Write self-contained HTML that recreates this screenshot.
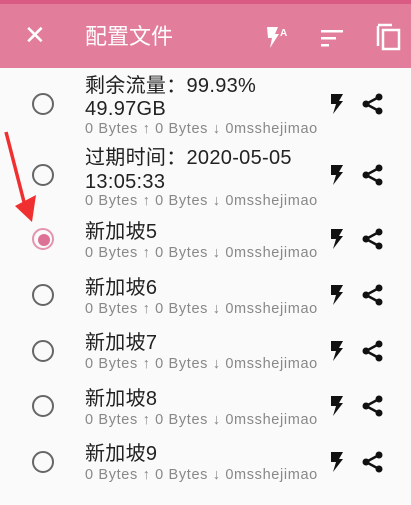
<!DOCTYPE html>
<html><head><meta charset="utf-8"><style>
body{margin:0;width:411px;height:505px;background:#fafafa;font-family:"Liberation Sans","Noto Sans CJK SC",sans-serif;position:relative;overflow:hidden}
.bar{position:absolute;left:0;top:0;width:411px;height:68px;background:#e27d9b;border-top:4px solid #d95a82;box-sizing:border-box}
.t{position:absolute;color:#222;font-size:20px;line-height:22px;left:85px;white-space:nowrap;letter-spacing:0.3px}
.s{position:absolute;color:#888;font-size:14.5px;line-height:16px;left:85px;white-space:nowrap;letter-spacing:0.65px}
.r{position:absolute;left:32px;width:18px;height:18px;border:2.5px solid #666;border-radius:50%}
.ic{position:absolute}
</style></head><body>
<div class="bar"></div>
<div style="position:absolute;left:24px;top:22px;color:#fff;font-size:26px;line-height:26px">✕</div>
<div style="position:absolute;left:85px;top:24px;color:#fff;font-size:22px;line-height:26px">配置文件</div>
<svg class="ic" style="left:265px;top:25px" width="26" height="26" viewBox="0 0 26 26"><path d="M2 2h11l-3 7h4l-9 14 2-10H3z" fill="#fff"/><text x="15" y="11" font-size="10" fill="#fff" font-weight="bold" font-family="Liberation Sans">A</text></svg>
<svg class="ic" style="left:321px;top:29px" width="24" height="18"><rect x="0" y="1" width="22" height="2.5" fill="#fff"/><rect x="0" y="8" width="15" height="2.5" fill="#fff"/><rect x="0" y="15" width="8" height="2.5" fill="#fff"/></svg>
<svg class="ic" style="left:376px;top:23px" width="26" height="28"><path d="M2 3v20" stroke="#fff" stroke-width="2.5"/><path d="M2 2h14" stroke="#fff" stroke-width="2.5"/><rect x="7" y="7" width="16" height="19" fill="none" stroke="#fff" stroke-width="2.5"/></svg>

<svg width="0" height="0" style="position:absolute"><defs>
<symbol id="b" viewBox="0 0 14 22"><path d="M1 1h12l-4 7h4L3 21l3-10H1z" fill="#111"/></symbol>
<symbol id="sh" viewBox="0 0 22 22"><circle cx="17" cy="4" r="3.5" fill="#111"/><circle cx="4" cy="11" r="3.5" fill="#111"/><circle cx="17" cy="18" r="3.5" fill="#111"/><path d="M17 4L4 11l13 7" stroke="#111" stroke-width="2.5" fill="none"/></symbol>
</defs></svg>

<div class="r" style="top:93px"></div>
<div class="t" style="top:75px">剩余流量：99.93%</div>
<div class="t" style="top:98px">49.97GB</div>
<div class="s" style="top:121px">0 Bytes ↑ 0 Bytes ↓ 0msshejimao</div>

<div class="r" style="top:164px"></div>
<div class="t" style="top:147px">过期时间：2020-05-05</div>
<div class="t" style="top:171px">13:05:33</div>
<div class="s" style="top:193px">0 Bytes ↑ 0 Bytes ↓ 0msshejimao</div>

<div class="r" style="top:228px;border-color:#e494ac"></div>
<div style="position:absolute;left:37.5px;top:233.5px;width:12px;height:12px;border-radius:50%;background:#dc7396"></div>
<div class="t" style="top:221px">新加坡5</div>
<div class="s" style="top:245px">0 Bytes ↑ 0 Bytes ↓ 0msshejimao</div>

<div class="r" style="top:284px"></div>
<div class="t" style="top:277px">新加坡6</div>
<div class="s" style="top:301px">0 Bytes ↑ 0 Bytes ↓ 0msshejimao</div>

<div class="r" style="top:340px"></div>
<div class="t" style="top:332px">新加坡7</div>
<div class="s" style="top:356px">0 Bytes ↑ 0 Bytes ↓ 0msshejimao</div>

<div class="r" style="top:395px"></div>
<div class="t" style="top:388px">新加坡8</div>
<div class="s" style="top:412px">0 Bytes ↑ 0 Bytes ↓ 0msshejimao</div>

<div class="r" style="top:451px"></div>
<div class="t" style="top:443px">新加坡9</div>
<div class="s" style="top:467px">0 Bytes ↑ 0 Bytes ↓ 0msshejimao</div>

<svg class="ic" style="left:330px;top:93px" width="14" height="22"><use href="#b"/></svg>
<svg class="ic" style="left:362px;top:93px" width="22" height="22"><use href="#sh"/></svg>
<svg class="ic" style="left:330px;top:164px" width="14" height="22"><use href="#b"/></svg>
<svg class="ic" style="left:362px;top:164px" width="22" height="22"><use href="#sh"/></svg>
<svg class="ic" style="left:330px;top:228px" width="14" height="22"><use href="#b"/></svg>
<svg class="ic" style="left:362px;top:228px" width="22" height="22"><use href="#sh"/></svg>
<svg class="ic" style="left:330px;top:284px" width="14" height="22"><use href="#b"/></svg>
<svg class="ic" style="left:362px;top:284px" width="22" height="22"><use href="#sh"/></svg>
<svg class="ic" style="left:330px;top:340px" width="14" height="22"><use href="#b"/></svg>
<svg class="ic" style="left:362px;top:340px" width="22" height="22"><use href="#sh"/></svg>
<svg class="ic" style="left:330px;top:395px" width="14" height="22"><use href="#b"/></svg>
<svg class="ic" style="left:362px;top:395px" width="22" height="22"><use href="#sh"/></svg>
<svg class="ic" style="left:330px;top:451px" width="14" height="22"><use href="#b"/></svg>
<svg class="ic" style="left:362px;top:451px" width="22" height="22"><use href="#sh"/></svg>

<svg class="ic" style="left:0;top:120px" width="50" height="110"><path d="M6 12L24 82" stroke="#f03030" stroke-width="3.5" fill="none"/><path d="M15 86L36 75L32 102z" fill="#f03030"/></svg>
</body></html>
